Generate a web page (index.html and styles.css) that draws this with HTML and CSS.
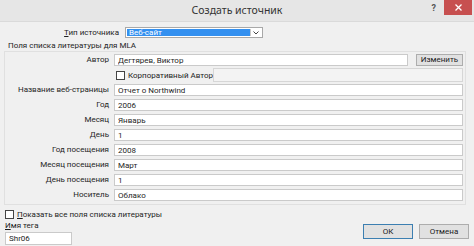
FILE: index.html
```html
<!DOCTYPE html>
<html>
<head>
    <title>Создать источник</title>
    <meta charset="UTF-8">
    <link rel="stylesheet" href="styles.css">
</head>
<body>
    <div class="window">
        <div class="titlebar">
            <span></span>
            <span class="title">Создать источник</span>
            <div class="controls">
                <span class="help">?</span>
                <span class="close">
                    <svg width="7" height="7" viewBox="0 0 7 7"><path d="M0.5 0.5 L6.5 6.5 M6.5 0.5 L0.5 6.5" stroke="#fff" stroke-width="1.3"/></svg>
                </span>
            </div>
        </div>

        <div class="content">
            <div class="type-row">
                <label><u>Т</u>ип источника</label>
                <div class="select">
                    <span class="selected">Веб-сайт</span>
                    <span class="arrow">
                        <svg width="6" height="4" viewBox="0 0 6 4"><path d="M0.5 0.5 L3 3 L5.5 0.5" fill="none" stroke="#444" stroke-width="1"/></svg>
                    </span>
                </div>
            </div>

            <div class="caption">Поля списка литературы для MLA</div>

            <div class="fields">
                <label>Автор</label>
                <div class="author-row">
                    <input class="field" value="Дегтярев, Виктор">
                    <button class="btn">Изменить</button>
                </div>

                <span></span>
                <div class="corp-row">
                    <span class="check"><span class="box"></span>Корпоративный Автор</span>
                    <span class="field disabled"></span>
                </div>

                <label>Название веб-страницы</label>
                <input class="field" value="Отчет о Northwind">
                <label>Год</label>
                <input class="field" value="2006">
                <label>Месяц</label>
                <input class="field" value="Январь">
                <label>День</label>
                <input class="field" value="1">
                <label>Год посещения</label>
                <input class="field" value="2008">
                <label>Месяц посещения</label>
                <input class="field" value="Март">
                <label>День посещения</label>
                <input class="field" value="1">
                <label>Носитель</label>
                <input class="field" value="Облако">
            </div>

            <div class="footer">
                <div class="footer-left">
                    <span class="check"><span class="box"></span><span><u>П</u>оказать все поля списка литературы</span></span>
                    <span class="tag-label"><u>И</u>мя тега</span>
                    <input class="field tag" value="Shr06">
                </div>
                <div class="buttons">
                    <button class="btn default">ОК</button>
                    <button class="btn">Отмена</button>
                </div>
            </div>
        </div>
    </div>
</body>
</html>
```

FILE: styles.css
```css
/* окно диалога */
body {
    margin: 0;
    font-family: Roboto, "Noto Sans", sans-serif;
    font-size: 8px;
    color: #1e1e1e;
    background: #f0f0f0;
}

.window {
    width: 474px;
    height: 246px;
    overflow: hidden;
    background: #f0f0f0;
}

.titlebar {
    height: 21px;
    display: grid;
    grid-template-columns: 60px 1fr 60px;
    align-items: start;
    background: #e6e6e6;
    border-bottom: 1px solid #dadada;
}

.title {
    text-align: center;
    font-family: "Noto Sans", sans-serif;
    font-size: 10.5px;
    line-height: 20px;
    color: #333;
}

.controls {
    display: flex;
    justify-content: flex-end;
    align-items: center;
    gap: 8px;
    padding-right: 2px;
}

.help {
    font-size: 9px;
    font-weight: bold;
    color: #555;
}

.close {
    width: 28px;
    height: 15px;
    background: #c75050;
    display: flex;
    align-items: center;
    justify-content: center;
}

.content {
    padding: 5px 0 0 0;
}

/* тип источника */
.type-row {
    display: flex;
    align-items: center;
    height: 11px;
}

.type-row label {
    width: 125px;
    text-align: right;
    padding-right: 6px;
    box-sizing: border-box;
}

.select {
    width: 138px;
    height: 11px;
    display: flex;
    border: 1px solid #a8a8a8;
    background: #fff;
    box-sizing: border-box;
    padding: 1px;
}

.selected {
    flex: 1;
    background: #3390f0;
    color: #fff;
    line-height: 7px;
    font-size: 8px;
    padding-left: 2px;
}

.arrow {
    width: 10px;
    border-left: 1px solid #c8c8c8;
    display: flex;
    align-items: center;
    justify-content: center;
}

.caption {
    margin: 3px 0 0 8px;
    height: 10px;
    line-height: 10px;
}

/* поля MLA */
.fields {
    margin: 0 8px 0 4px;
    padding: 2px 2px 3px 0;
    border: 1px solid #e0e0e0;
    display: grid;
    grid-template-columns: 104px 1fr;
    grid-auto-rows: 12px;
    row-gap: 3px;
    column-gap: 5px;
    align-items: center;
}

.fields label {
    text-align: right;
    line-height: 12px;
}

.field {
    height: 12px;
    box-sizing: border-box;
    border: 1px solid #cacaca;
    background: #fff;
    font: inherit;
    padding: 0 3px;
    margin: 0;
    color: #1e1e1e;
    width: 100%;
    outline: none;
}

.field.disabled {
    display: block;
    height: 14px;
    background: #f3f3f3;
    border-color: #d6d6d6;
}

.author-row {
    display: grid;
    grid-template-columns: 1fr 47px;
    gap: 8px;
}

.btn {
    height: 12px;
    box-sizing: border-box;
    border: 1px solid #adadad;
    background: #e1e1e1;
    font: inherit;
    padding: 0;
    margin: 0;
    color: #222;
    line-height: 10px;
}

.corp-row {
    display: grid;
    grid-template-columns: 99px 1fr;
    align-items: center;
}

.corp-row .check {
    padding-left: 2px;
}

.check {
    display: flex;
    align-items: center;
    gap: 3px;
    white-space: nowrap;
}

.box {
    width: 9px;
    height: 9px;
    box-sizing: border-box;
    border: 1px solid #444;
    background: #fff;
}

/* нижняя часть */
.footer {
    display: flex;
    justify-content: space-between;
    align-items: flex-end;
    padding: 5px 5px 0 5px;
}

.footer-left {
    display: flex;
    flex-direction: column;
    align-items: flex-start;
}

.tag-label {
    margin-top: 2px;
    line-height: 10px;
}

.field.tag {
    width: 67px;
    height: 13px;
    margin-top: 1px;
}

.buttons {
    display: flex;
    gap: 6px;
    margin-bottom: 6px;
}

.buttons .btn {
    width: 50px;
    height: 15px;
}

.btn.default {
    border-color: #3c7fb1;
}
```
